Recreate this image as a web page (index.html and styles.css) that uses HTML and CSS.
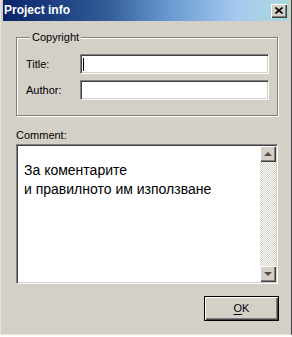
FILE: index.html
```html
<!DOCTYPE html>
<html lang="en">
<head>
  <meta charset="UTF-8">
  <title>Project info</title>
  <link rel="stylesheet" href="styles.css">
</head>
<body>
  <div class="window">
    <div class="titlebar">
      <span class="title">Project info</span>
      <span class="close">
        <svg width="8" height="7" viewBox="0 0 8 7"><path d="M0.5 0.5 L7.5 6.5 M7.5 0.5 L0.5 6.5" stroke="#000" stroke-width="1.6" fill="none"/></svg>
      </span>
    </div>

    <div class="content">
      <fieldset class="group">
        <legend>Copyright</legend>
        <div class="field">
          <label>Title:</label>
          <div class="edit"><span class="caret"></span></div>
        </div>
        <div class="field">
          <label>Author:</label>
          <div class="edit"></div>
        </div>
      </fieldset>

      <div class="comment-label">Comment:</div>
      <div class="memo">
        <div class="memo-text">За коментарите<br>и правилното им използване</div>
        <div class="scrollbar">
          <div class="sb-btn"><span class="arrow up"></span></div>
          <div class="sb-track"></div>
          <div class="sb-btn"><span class="arrow down"></span></div>
        </div>
      </div>

      <div class="actions">
        <div class="btn default"><u>O</u>K</div>
      </div>
    </div>
  </div>
</body>
</html>
```

FILE: styles.css
```css
body {
  margin: 0;
  background: #fff;
  font-family: "Liberation Sans", Arial, sans-serif;
  font-size: 11px;
  line-height: 13px;
  color: #000;
}
.window {
  width: 292px;
  height: 335px;
  box-sizing: border-box;
  background: #d4d0c8;
  border-left: 1px solid #e4e2dc;
  border-right: 1px solid #404040;
  border-bottom: 1px solid #e4e2dc;
  padding: 0 2px;
}
.titlebar {
  height: 21px;
  display: flex;
  align-items: center;
  justify-content: space-between;
  padding: 0 2px 0 1px;
  background: linear-gradient(90deg, #0a246a 0%, #2f5a94 35%, #6d9ed4 60%, #a6caf0 82%, #a9dada 100%);
}
.title {
  color: #fff;
  font-weight: bold;
  font-size: 12px;
}
.close {
  width: 16px;
  height: 14px;
  box-sizing: border-box;
  background: #d4d0c8;
  display: flex;
  align-items: center;
  justify-content: center;
  box-shadow: inset 1px 1px 0 #fff, inset -1px -1px 0 #404040, inset -2px -2px 0 #808080;
}
.content {
  padding: 10px 11px 0 13px;
}
.group {
  margin: 0;
  padding: 10px 8px 15px 9px;
  border: 1px solid #808080;
  box-shadow: inset 1px 1px 0 #fff, 1px 1px 0 #fff;
}
.group legend {
  margin-left: 4px;
  padding: 0 2px;
  background: #d4d0c8;
}
.field {
  display: flex;
  align-items: center;
}
.field + .field {
  margin-top: 6px;
}
.field label {
  width: 54px;
}
.edit {
  flex: 1;
  height: 20px;
  box-sizing: border-box;
  background: #fff;
  border: 1px solid;
  border-color: #808080 #fff #fff #808080;
  box-shadow: inset 1px 1px 0 #404040, inset -1px -1px 0 #d4d0c8;
  padding: 3px 0 0 2px;
}
.caret {
  display: block;
  width: 1px;
  height: 13px;
  background: #000;
}
.comment-label {
  margin-top: 13px;
}
.memo {
  margin-top: 2px;
  height: 140px;
  box-sizing: border-box;
  display: flex;
  background: #fff;
  border: 1px solid;
  border-color: #808080 #fff #fff #808080;
  box-shadow: inset 1px 1px 0 #404040, inset -1px -1px 0 #d4d0c8;
  padding: 1px;
}
.memo-text {
  flex: 1;
  padding: 15px 0 0 6px;
  font-family: "Liberation Sans", Arial, sans-serif;
  font-size: 14px;
  line-height: 19px;
}
.scrollbar {
  width: 16px;
  display: flex;
  flex-direction: column;
}
.sb-btn {
  height: 16px;
  box-sizing: border-box;
  background: #d4d0c8;
  display: flex;
  align-items: center;
  justify-content: center;
  box-shadow: inset 1px 1px 0 #fff, inset -1px -1px 0 #404040, inset -2px -2px 0 #808080;
}
.sb-track {
  flex: 1;
  background: repeating-conic-gradient(#d4d0c8 0 25%, #fff 0 50%) 0 0 / 2px 2px;
}
.arrow {
  width: 0;
  height: 0;
  border-left: 4px solid transparent;
  border-right: 4px solid transparent;
}
.arrow.up {
  border-bottom: 4px solid #5a4848;
}
.arrow.down {
  border-top: 4px solid #5a4848;
}
.actions {
  margin-top: 12px;
  margin-right: -1px;
  display: flex;
  justify-content: flex-end;
}
.btn {
  width: 75px;
  height: 25px;
  box-sizing: border-box;
  display: flex;
  align-items: center;
  justify-content: center;
  background: #d4d0c8;
  box-shadow: inset 1px 1px 0 #fff, inset -1px -1px 0 #404040, inset -2px -2px 0 #808080;
}
.btn.default {
  border: 1px solid #000;
}
.btn u {
  text-underline-offset: 2px;
}
```
